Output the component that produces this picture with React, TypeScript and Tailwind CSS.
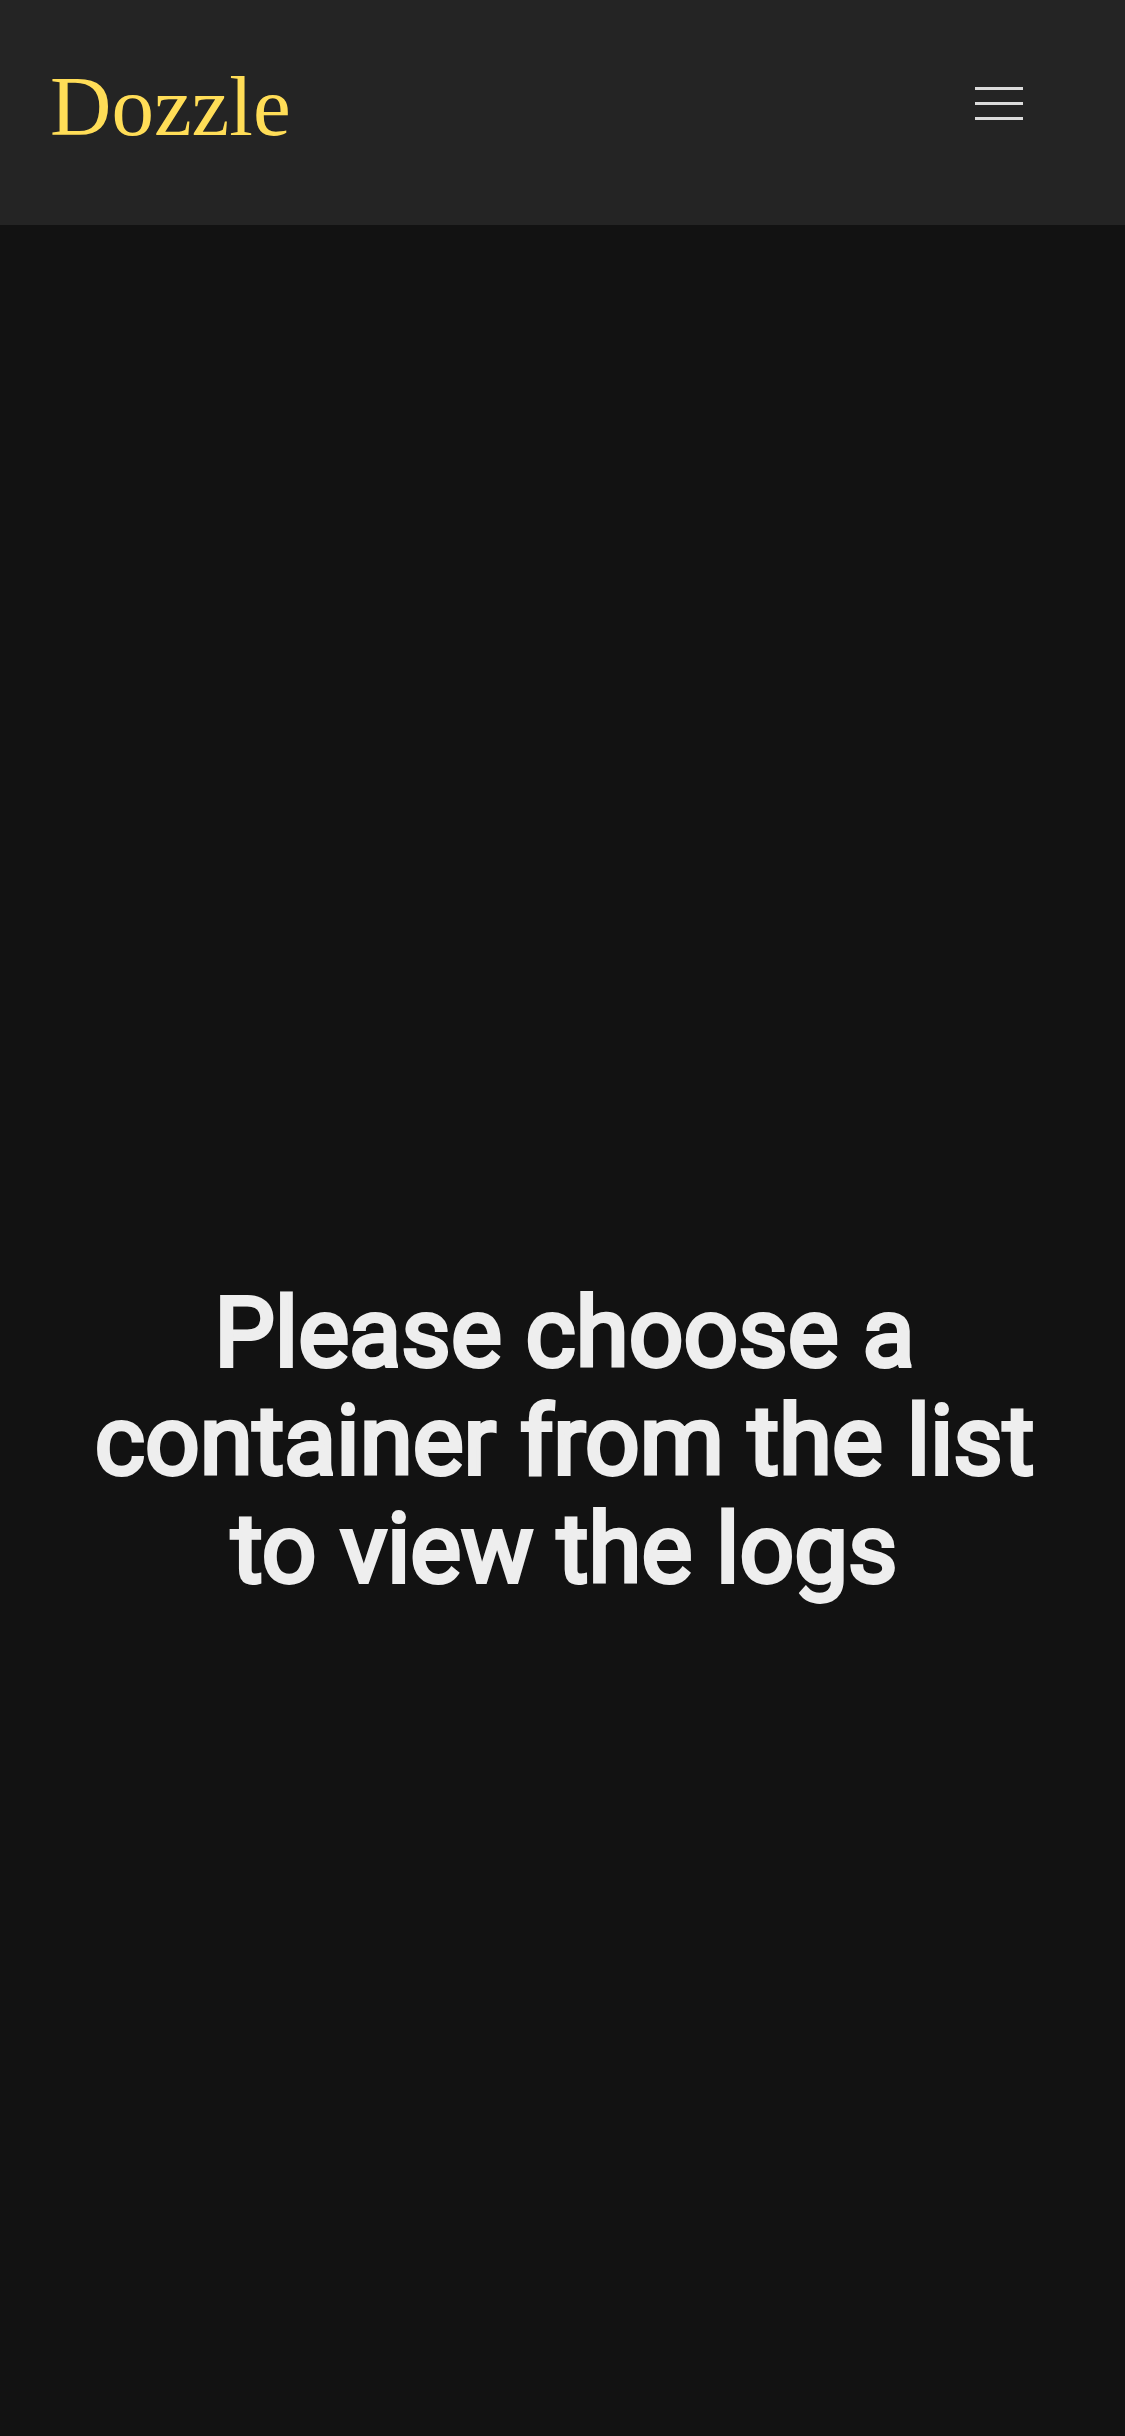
export default function App() {
  return (
    <div className="flex min-h-screen flex-col bg-[#121212] font-[Roboto,sans-serif]">
      <header className="flex h-[225px] items-start justify-between bg-[#242424] pl-[50px] pr-[60px]">
        <h1 className="mt-[46px] font-['Liberation_Serif',serif] text-[85px] leading-[120px] text-[#ffdd57]">Dozzle</h1>
        <button type="button" aria-label="Open menu" className="mt-[37px] flex h-[132px] w-[132px] flex-col items-center justify-center gap-3">
          <span className="h-[3px] w-12 bg-[#dbdbdb]" />
          <span className="h-[3px] w-12 bg-[#dbdbdb]" />
          <span className="h-[3px] w-12 bg-[#dbdbdb]" />
        </button>
      </header>
      <main className="flex grow items-center justify-center pb-[8px] pl-[76px] pr-[72px] pt-[228px]">
        <p className="max-w-[980px] text-center text-[96px] font-normal leading-[108px] text-[#eeeeee] [-webkit-text-stroke:4px_#eeeeee]">Please choose a container from the list to view the logs</p>
      </main>
    </div>
  );
}
